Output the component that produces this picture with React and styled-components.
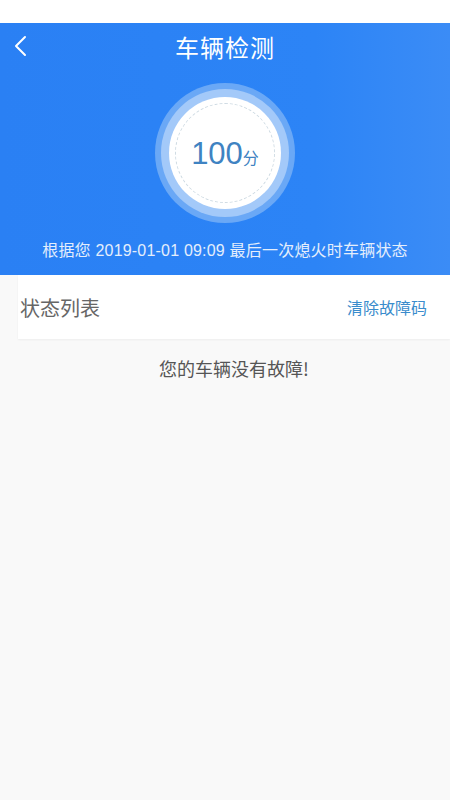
import React from "react";
import styled, { createGlobalStyle } from "styled-components";

const Global = createGlobalStyle`
  html, body { margin: 0; padding: 0; background: #f9f9f9; }
  body { font-family: "Liberation Sans", "Noto Sans CJK SC", sans-serif; }
`;

const Page = styled.div`
  width: 450px;
  min-height: 800px;
  background: #f9f9f9;
  display: flex;
  flex-direction: column;
`;

const StatusBar = styled.div`
  height: 23px;
  background: #ffffff;
`;

const Header = styled.div`
  background: linear-gradient(90deg, #2a80f4 0%, #2c84f6 70%, #3b8cf6 100%);
  height: 252px;
  display: flex;
  flex-direction: column;
  align-items: center;
`;

const NavBar = styled.div`
  width: 100%;
  height: 46px;
  display: flex;
  align-items: center;
  justify-content: center;
  position: relative;
`;

const Back = styled.div`
  position: absolute;
  left: 12px;
  top: 11px;
  width: 20px;
  height: 24px;
`;

const Title = styled.div`
  color: #ffffff;
  font-family: "Noto Sans CJK SC", sans-serif;
  font-size: 24px;
  letter-spacing: 1px;
`;

const Gauge = styled.div`
  margin-top: 14px;
  width: 140px;
  height: 140px;
  border-radius: 50%;
  background: #6aa8f6;
  display: flex;
  align-items: center;
  justify-content: center;
`;

const Ring = styled.div`
  width: 128px;
  height: 128px;
  border-radius: 50%;
  background: #a3c9f9;
  display: flex;
  align-items: center;
  justify-content: center;
`;

const Inner = styled.div`
  width: 112px;
  height: 112px;
  border-radius: 50%;
  background: #ffffff;
  display: flex;
  align-items: center;
  justify-content: center;
`;

const Dashed = styled.div`
  width: 100px;
  height: 100px;
  border-radius: 50%;
  border: 1px dashed #cfdbe3;
  box-sizing: border-box;
  display: flex;
  align-items: center;
  justify-content: center;
  color: #3f83c2;
`;

const Score = styled.span`
  font-family: "Liberation Sans", sans-serif;
  font-size: 31px;
  line-height: 1;
`;

const Unit = styled.span`
  font-family: "Noto Sans CJK SC", sans-serif;
  font-size: 16px;
  margin-top: 8px;
`;

const Note = styled.div`
  margin-top: 14px;
  color: #e4eefc;
  font-size: 16px;
  letter-spacing: 0.2px;
`;

const Body = styled.div`
  margin-left: 18px;
  display: flex;
  flex-direction: column;
`;

const Card = styled.div`
  height: 64px;
  background: #ffffff;
  display: flex;
  align-items: center;
  justify-content: space-between;
  padding: 0 23px 0 2px;
  box-shadow: 0 1px 2px rgba(0, 0, 0, 0.05);
  font-family: "Noto Sans CJK SC", sans-serif;
`;

const CardTitle = styled.div`
  font-size: 20px;
  color: #666666;
`;

const Action = styled.div`
  font-size: 16px;
  color: #3a8ccc;
`;

const Empty = styled.div`
  text-align: center;
  margin-top: 16px;
  font-family: "Noto Sans CJK SC", sans-serif;
  font-size: 18px;
  color: #555555;
`;

export default function App() {
  return (
    <Page>
      <Global />
      <StatusBar />
      <Header>
        <NavBar>
          <Back>
            <svg width="20" height="24" viewBox="0 0 20 24">
              <path d="M13 3 L4 12 L13 21" fill="none" stroke="#fff" strokeWidth="2" strokeLinecap="round" strokeLinejoin="round" />
            </svg>
          </Back>
          <Title>车辆检测</Title>
        </NavBar>
        <Gauge>
          <Ring>
            <Inner>
              <Dashed>
                <Score>100</Score>
                <Unit>分</Unit>
              </Dashed>
            </Inner>
          </Ring>
        </Gauge>
        <Note>根据您 2019-01-01 09:09 最后一次熄火时车辆状态</Note>
      </Header>
      <Body>
        <Card>
          <CardTitle>状态列表</CardTitle>
          <Action>清除故障码</Action>
        </Card>
        <Empty>您的车辆没有故障!</Empty>
      </Body>
    </Page>
  );
}
